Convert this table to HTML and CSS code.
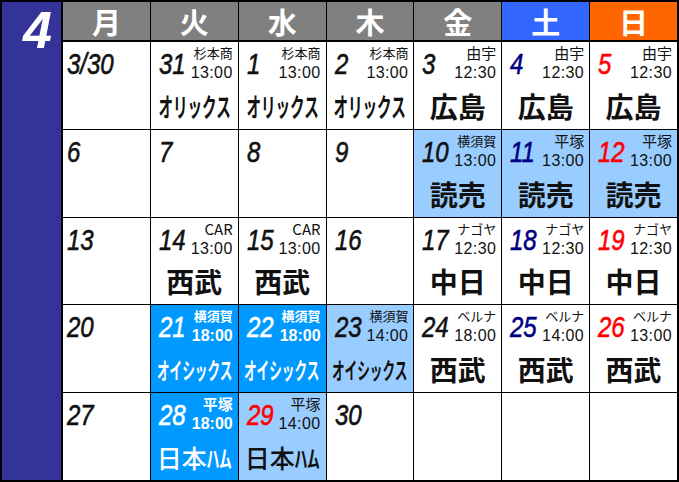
FILE: index.html
```html
<!DOCTYPE html>
<html lang="ja">
<head>
<meta charset="utf-8">
<title>4月 日程</title>
<link rel="stylesheet" href="styles.css">
</head>
<body>
<div class="cal">
  <div class="month"><span class="month-num">4</span></div>

  <div class="head">月</div>
  <div class="head">火</div>
  <div class="head">水</div>
  <div class="head">木</div>
  <div class="head">金</div>
  <div class="head sat">土</div>
  <div class="head sun">日</div>

  <!-- week 1 -->
  <div class="cell mon"><div class="top"><span class="num">3/30</span></div></div>
  <div class="cell"><div class="top"><span class="num">31</span><div class="venue"><span class="place sm">杉本商</span><span class="time">13:00</span></div></div><div class="team"><span class="kata">オリックス</span></div></div>
  <div class="cell"><div class="top"><span class="num">1</span><div class="venue"><span class="place sm">杉本商</span><span class="time">13:00</span></div></div><div class="team"><span class="kata">オリックス</span></div></div>
  <div class="cell"><div class="top"><span class="num">2</span><div class="venue"><span class="place sm">杉本商</span><span class="time">13:00</span></div></div><div class="team"><span class="kata">オリックス</span></div></div>
  <div class="cell"><div class="top"><span class="num">3</span><div class="venue"><span class="place">由宇</span><span class="time">12:30</span></div></div><div class="team"><span>広島</span></div></div>
  <div class="cell"><div class="top"><span class="num navy">4</span><div class="venue"><span class="place">由宇</span><span class="time">12:30</span></div></div><div class="team"><span>広島</span></div></div>
  <div class="cell"><div class="top"><span class="num red">5</span><div class="venue"><span class="place">由宇</span><span class="time">12:30</span></div></div><div class="team"><span>広島</span></div></div>

  <!-- week 2 -->
  <div class="cell mon"><div class="top"><span class="num">6</span></div></div>
  <div class="cell"><div class="top"><span class="num">7</span></div></div>
  <div class="cell"><div class="top"><span class="num">8</span></div></div>
  <div class="cell"><div class="top"><span class="num">9</span></div></div>
  <div class="cell light"><div class="top"><span class="num">10</span><div class="venue"><span class="place sm">横須賀</span><span class="time">13:00</span></div></div><div class="team"><span>読売</span></div></div>
  <div class="cell light"><div class="top"><span class="num navy">11</span><div class="venue"><span class="place">平塚</span><span class="time">13:00</span></div></div><div class="team"><span>読売</span></div></div>
  <div class="cell light"><div class="top"><span class="num red">12</span><div class="venue"><span class="place">平塚</span><span class="time">13:00</span></div></div><div class="team"><span>読売</span></div></div>

  <!-- week 3 -->
  <div class="cell mon"><div class="top"><span class="num">13</span></div></div>
  <div class="cell"><div class="top"><span class="num">14</span><div class="venue"><span class="place">CAR</span><span class="time">13:00</span></div></div><div class="team"><span>西武</span></div></div>
  <div class="cell"><div class="top"><span class="num">15</span><div class="venue"><span class="place">CAR</span><span class="time">13:00</span></div></div><div class="team"><span>西武</span></div></div>
  <div class="cell"><div class="top"><span class="num">16</span></div></div>
  <div class="cell"><div class="top"><span class="num">17</span><div class="venue"><span class="place sm">ナゴヤ</span><span class="time">12:30</span></div></div><div class="team"><span>中日</span></div></div>
  <div class="cell"><div class="top"><span class="num navy">18</span><div class="venue"><span class="place sm">ナゴヤ</span><span class="time">12:30</span></div></div><div class="team"><span>中日</span></div></div>
  <div class="cell"><div class="top"><span class="num red">19</span><div class="venue"><span class="place sm">ナゴヤ</span><span class="time">12:30</span></div></div><div class="team"><span>中日</span></div></div>

  <!-- week 4 -->
  <div class="cell mon"><div class="top"><span class="num">20</span></div></div>
  <div class="cell strong"><div class="top"><span class="num">21</span><div class="venue"><span class="place sm">横須賀</span><span class="time">18:00</span></div></div><div class="team"><span class="kata6">オイシックス</span></div></div>
  <div class="cell strong"><div class="top"><span class="num">22</span><div class="venue"><span class="place sm">横須賀</span><span class="time">18:00</span></div></div><div class="team"><span class="kata6">オイシックス</span></div></div>
  <div class="cell light"><div class="top"><span class="num">23</span><div class="venue"><span class="place sm">横須賀</span><span class="time">14:00</span></div></div><div class="team"><span class="kata6">オイシックス</span></div></div>
  <div class="cell"><div class="top"><span class="num">24</span><div class="venue"><span class="place sm">ベルナ</span><span class="time">18:00</span></div></div><div class="team"><span>西武</span></div></div>
  <div class="cell"><div class="top"><span class="num navy">25</span><div class="venue"><span class="place sm">ベルナ</span><span class="time">14:00</span></div></div><div class="team"><span>西武</span></div></div>
  <div class="cell"><div class="top"><span class="num red">26</span><div class="venue"><span class="place sm">ベルナ</span><span class="time">13:00</span></div></div><div class="team"><span>西武</span></div></div>

  <!-- week 5 -->
  <div class="cell mon"><div class="top"><span class="num">27</span></div></div>
  <div class="cell strong"><div class="top"><span class="num">28</span><div class="venue"><span class="place">平塚</span><span class="time">18:00</span></div></div><div class="team"><span class="ham">日本ﾊﾑ</span></div></div>
  <div class="cell light"><div class="top"><span class="num red">29</span><div class="venue"><span class="place">平塚</span><span class="time">14:00</span></div></div><div class="team"><span class="ham">日本ﾊﾑ</span></div></div>
  <div class="cell"><div class="top"><span class="num">30</span></div></div>
  <div class="cell"></div>
  <div class="cell"></div>
  <div class="cell"></div>
</div>
</body>
</html>
```

FILE: styles.css
```css
html, body {
  margin: 0;
  padding: 0;
  background: #fff;
}

.cal {
  width: 679px;
  height: 482px;
  box-sizing: border-box;
  border: 2px solid #000;
  background: #000;
  display: grid;
  grid-template-columns: 60px repeat(7, 1fr);
  grid-template-rows: 39px repeat(5, 1fr);
  gap: 1px;
  font-family: "Noto Sans CJK JP", sans-serif;
}

.month {
  grid-row: 1 / -1;
  grid-column: 1;
  background: #333399;
  border-right: 1px solid #000;
  display: flex;
  justify-content: center;
  align-items: flex-start;
  padding-top: 2px;
}

.month-num {
  font-family: "Liberation Sans", sans-serif;
  font-style: italic;
  font-weight: bold;
  font-size: 52px;
  line-height: 52px;
  color: #fff;
  margin-left: 12px;
}

.head {
  background: #808080;
  color: #fff;
  font-weight: bold;
  font-size: 29px;
  line-height: 38px;
  text-align: center;
  border-bottom: 1px solid #000;
}

.head.sat { background: #3366ff; }
.head.sun { background: #ff6600; }

.cell {
  background: #fff;
  display: flex;
  flex-direction: column;
  overflow: hidden;
  color: #111;
}

.cell.light { background: #99ccff; }
.cell.strong { background: #0099ff; color: #fff; }

.top {
  height: 41px;
  box-sizing: border-box;
  padding: 1px 5px 0 8px;
  display: flex;
  align-items: flex-start;
}

.cell.mon .top { padding-left: 4px; }

.num {
  flex: 0 0 auto;
  display: inline-block;
  font-family: "Liberation Sans", sans-serif;
  font-style: italic;
  font-size: 30px;
  line-height: 40px;
  padding-top: 1px;
  -webkit-text-stroke: 0.6px currentColor;
  transform: scaleX(0.8);
  transform-origin: left center;
  margin-right: -8px;
  white-space: nowrap;
}

.num.navy { color: #000080; }
.num.red { color: #ff0000; }

.venue {
  margin-left: auto;
  display: flex;
  flex-direction: column;
  align-items: flex-end;
  line-height: 20px;
  white-space: nowrap;
}

.place { font-size: 15px; }
.place.sm { font-size: 13px; }

.time {
  font-family: "Liberation Sans", sans-serif;
  font-size: 16px;
  letter-spacing: 0.4px;
}

.cell.strong .place,
.cell.strong .time { font-weight: bold; }

.cell.strong .time { letter-spacing: 0; }

.team {
  height: 50px;
  display: flex;
  justify-content: center;
  align-items: center;
  font-size: 28px;
  font-weight: bold;
  white-space: nowrap;
}

.team .kata {
  font-size: 26px;
  display: inline-block;
  transform: scaleX(0.56);
}

.team .kata6 {
  font-size: 23px;
  display: inline-block;
  transform: scaleX(0.55);
}

.team .ham {
  font-size: 25px;
  font-weight: 500;
}
```
